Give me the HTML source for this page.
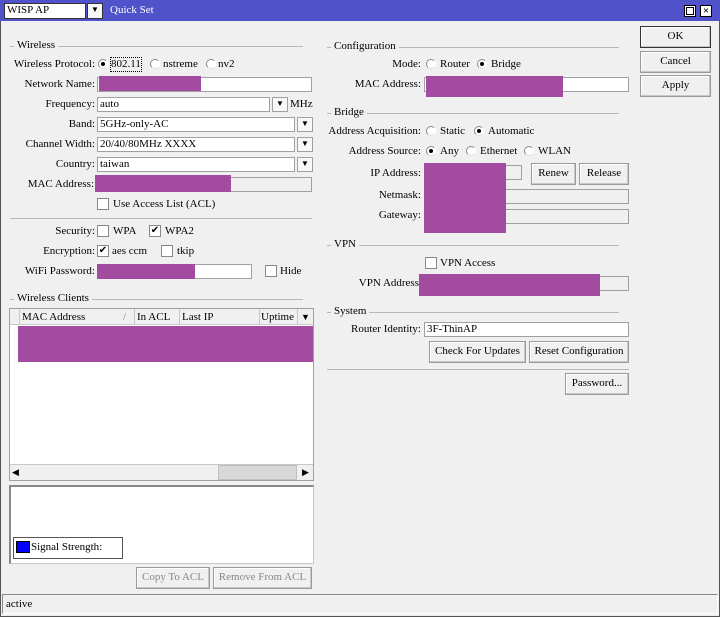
<!DOCTYPE html>
<html><head><style>
*{box-sizing:border-box;margin:0;padding:0}
body{width:720px;height:617px;background:#f0f0f0;font-family:"Liberation Serif",serif;font-size:11px;color:#000;position:relative;overflow:hidden}
.a{position:absolute;white-space:nowrap;line-height:13px}
.r{text-align:right}
.in{position:absolute;background:#fff;border:1px solid #a0a0a0;height:15px;padding-left:2px;line-height:13px}
.ro{background:#f0f0f0}
.pu{position:absolute;background:#a24ba0}
.dd{position:absolute;width:16px;height:15px;border:1px solid #a0a0a0;background:#f8f8f8;font-size:8px;text-align:center;line-height:12px}
.btn{position:absolute;border:1px solid #9a9a9a;background:#f0f0f0;text-align:center;line-height:19px;height:22px;box-shadow:inset -1px -1px #c8c8c8,inset 1px 1px #fff}
.cb{position:absolute;width:12px;height:12px;border:1px solid #888;background:#fff;font-size:10px;line-height:10px;text-align:center}
.rd{position:absolute;width:10px;height:10px;border-radius:50%;border:1px solid #888;border-right-color:#fff;border-bottom-color:#ddd;background:#fff}
.rd.on::after{content:"";position:absolute;left:2px;top:2px;width:4px;height:4px;border-radius:50%;background:#000}
.lg{position:absolute;height:1px;background:#b8b8b8}
.lgt{position:absolute;background:#f0f0f0;padding:0 3px;line-height:13px}
</style></head><body>
<div style="position:absolute;left:0;top:0;width:720px;height:617px;border:1px solid #555"></div>
<div style="position:absolute;left:0;top:0;width:720px;height:21px;background:#4f52c9"></div>
<div class="in" style="left:4px;top:3px;width:82px;height:16px;border-color:#333">WISP AP</div>
<div class="dd" style="left:87px;top:3px;height:16px;border-color:#333">&#9660;</div>
<div class="a" style="left:110px;top:4px;color:#fff">Quick Set</div>
<div style="position:absolute;left:684px;top:5px;width:12px;height:12px;background:#fff;border:1px solid #000;box-shadow:inset 0 0 0 1px #fff,inset 0 0 0 2px #000"></div>
<div style="position:absolute;left:700px;top:5px;width:12px;height:12px;background:#fff;border:1px solid #000;font-size:11px;line-height:10px;text-align:center;font-weight:bold">×</div>

<!-- left: Wireless -->
<div class="lg" style="left:10px;top:46px;width:293px"></div><div class="lgt" style="left:14px;top:39px">Wireless</div>
<div class="a r" style="left:0;width:95px;top:58px">Wireless Protocol:</div>
<div class="rd on" style="left:98px;top:59px"></div><div class="a" style="left:111px;top:58px;outline:1px dotted #000">802.11</div>
<div class="rd" style="left:150px;top:59px"></div><div class="a" style="left:163px;top:58px">nstreme</div>
<div class="rd" style="left:206px;top:59px"></div><div class="a" style="left:218px;top:58px">nv2</div>
<div class="a r" style="left:0;width:95px;top:78px">Network Name:</div>
<div class="in" style="left:97px;top:77px;width:215px"></div><div class="pu" style="left:99px;top:76px;width:102px;height:15px"></div>
<div class="a r" style="left:0;width:95px;top:98px">Frequency:</div>
<div class="in" style="left:97px;top:97px;width:173px">auto</div><div class="dd" style="left:272px;top:97px">&#9660;</div><div class="a" style="left:290px;top:98px">MHz</div>
<div class="a r" style="left:0;width:95px;top:118px">Band:</div>
<div class="in" style="left:97px;top:117px;width:198px">5GHz-only-AC</div><div class="dd" style="left:297px;top:117px">&#9660;</div>
<div class="a r" style="left:0;width:95px;top:138px">Channel Width:</div>
<div class="in" style="left:97px;top:137px;width:198px">20/40/80MHz XXXX</div><div class="dd" style="left:297px;top:137px">&#9660;</div>
<div class="a r" style="left:0;width:95px;top:158px">Country:</div>
<div class="in" style="left:97px;top:157px;width:198px">taiwan</div><div class="dd" style="left:297px;top:157px">&#9660;</div>
<div class="a r" style="left:0;width:94px;top:178px">MAC Address:</div>
<div class="in ro" style="left:95px;top:177px;width:217px"></div><div class="pu" style="left:95px;top:175px;width:136px;height:17px"></div>
<div class="cb" style="left:97px;top:198px"></div><div class="a" style="left:113px;top:198px">Use Access List (ACL)</div>
<div class="lg" style="left:10px;top:218px;width:302px"></div>
<div class="a r" style="left:0;width:95px;top:225px">Security:</div>
<div class="cb" style="left:97px;top:225px"></div><div class="a" style="left:113px;top:225px">WPA</div>
<div class="cb" style="left:149px;top:225px">&#10004;</div><div class="a" style="left:165px;top:225px">WPA2</div>
<div class="a r" style="left:0;width:95px;top:245px">Encryption:</div>
<div class="cb" style="left:97px;top:245px">&#10004;</div><div class="a" style="left:112px;top:245px">aes ccm</div>
<div class="cb" style="left:161px;top:245px"></div><div class="a" style="left:177px;top:245px">tkip</div>
<div class="a r" style="left:0;width:95px;top:265px">WiFi Password:</div>
<div class="in" style="left:97px;top:264px;width:155px"></div><div class="pu" style="left:97px;top:264px;width:98px;height:15px"></div>
<div class="cb" style="left:265px;top:265px"></div><div class="a" style="left:280px;top:265px">Hide</div>

<div class="lg" style="left:10px;top:299px;width:293px"></div><div class="lgt" style="left:14px;top:292px">Wireless Clients</div>
<div style="position:absolute;left:9px;top:308px;width:305px;height:173px;background:#fff;border:1px solid #a0a0a0"></div>
<div style="position:absolute;left:10px;top:309px;width:303px;height:16px;background:#f0f0f0;border-bottom:1px solid #c8c8c8"></div>
<div style="position:absolute;left:19px;top:309px;width:1px;height:16px;background:#c8c8c8"></div>
<div style="position:absolute;left:134px;top:309px;width:1px;height:16px;background:#c8c8c8"></div>
<div style="position:absolute;left:179px;top:309px;width:1px;height:16px;background:#c8c8c8"></div>
<div style="position:absolute;left:259px;top:309px;width:1px;height:16px;background:#c8c8c8"></div>
<div style="position:absolute;left:297px;top:309px;width:1px;height:16px;background:#c8c8c8"></div>
<div class="a" style="left:22px;top:311px">MAC Address</div><div class="a" style="left:123px;top:311px;color:#888">/</div>
<div class="a" style="left:137px;top:311px">In ACL</div><div class="a" style="left:182px;top:311px">Last IP</div><div class="a" style="left:261px;top:311px">Uptime</div>
<div class="a" style="left:301px;top:311px;font-size:9px">&#9660;</div>
<div class="pu" style="left:18px;top:326px;width:295px;height:36px"></div>
<div style="position:absolute;left:10px;top:464px;width:303px;height:16px;background:#f0f0f0;border-top:1px solid #c8c8c8"></div>
<div style="position:absolute;left:218px;top:465px;width:79px;height:15px;background:#d8d8d8;border:1px solid #c0c0c0"></div>
<div class="a" style="left:12px;top:466px;font-size:9px">&#9664;</div><div class="a" style="left:302px;top:466px;font-size:9px">&#9654;</div>
<div style="position:absolute;left:9px;top:485px;width:305px;height:79px;background:#fff;border:1px solid #c8c8c8;border-top:2px solid #888;border-left:2px solid #888"></div>
<div style="position:absolute;left:13px;top:537px;width:110px;height:22px;background:#fff;border:1px solid #555"></div>
<div style="position:absolute;left:16px;top:541px;width:14px;height:12px;background:#00f;border:1px solid #000"></div>
<div class="a" style="left:31px;top:541px">Signal Strength:</div>
<div class="btn" style="left:136px;top:567px;width:74px;color:#888">Copy To ACL</div>
<div class="btn" style="left:213px;top:567px;width:99px;color:#888">Remove From ACL</div>

<!-- right -->
<div class="lg" style="left:327px;top:47px;width:292px"></div><div class="lgt" style="left:331px;top:40px">Configuration</div>
<div class="a r" style="left:0;width:421px;top:58px">Mode:</div>
<div class="rd" style="left:426px;top:59px"></div><div class="a" style="left:440px;top:58px">Router</div>
<div class="rd on" style="left:477px;top:59px"></div><div class="a" style="left:491px;top:58px">Bridge</div>
<div class="a r" style="left:0;width:421px;top:78px">MAC Address:</div>
<div class="in" style="left:424px;top:77px;width:205px"></div><div class="pu" style="left:426px;top:76px;width:137px;height:21px"></div>
<div class="lg" style="left:327px;top:113px;width:292px"></div><div class="lgt" style="left:331px;top:106px">Bridge</div>
<div class="a r" style="left:0;width:421px;top:125px">Address Acquisition:</div>
<div class="rd" style="left:426px;top:126px"></div><div class="a" style="left:440px;top:125px">Static</div>
<div class="rd on" style="left:474px;top:126px"></div><div class="a" style="left:488px;top:125px">Automatic</div>
<div class="a r" style="left:0;width:421px;top:145px">Address Source:</div>
<div class="rd on" style="left:426px;top:146px"></div><div class="a" style="left:440px;top:145px">Any</div>
<div class="rd" style="left:466px;top:146px"></div><div class="a" style="left:480px;top:145px">Ethernet</div>
<div class="rd" style="left:524px;top:146px"></div><div class="a" style="left:538px;top:145px">WLAN</div>
<div class="a r" style="left:0;width:421px;top:167px">IP Address:</div>
<div class="in ro" style="left:424px;top:165px;width:98px"></div>
<div class="btn" style="left:531px;top:163px;width:45px">Renew</div>
<div class="btn" style="left:579px;top:163px;width:50px">Release</div>
<div class="a r" style="left:0;width:421px;top:189px">Netmask:</div>
<div class="in ro" style="left:424px;top:189px;width:205px"></div>
<div class="a r" style="left:0;width:421px;top:209px">Gateway:</div>
<div class="in ro" style="left:424px;top:209px;width:205px"></div>
<div class="pu" style="left:424px;top:163px;width:82px;height:70px"></div>
<div class="lg" style="left:327px;top:245px;width:292px"></div><div class="lgt" style="left:331px;top:238px">VPN</div>
<div class="cb" style="left:425px;top:257px"></div><div class="a" style="left:440px;top:257px">VPN Access</div>
<div class="a r" style="left:0;width:419px;top:277px">VPN Address</div>
<div class="in ro" style="left:419px;top:276px;width:210px"></div><div class="pu" style="left:419px;top:274px;width:181px;height:22px"></div>
<div class="lg" style="left:327px;top:312px;width:292px"></div><div class="lgt" style="left:331px;top:305px">System</div>
<div class="a r" style="left:0;width:421px;top:323px">Router Identity:</div>
<div class="in" style="left:424px;top:322px;width:205px">3F-ThinAP</div>
<div class="btn" style="left:429px;top:341px;width:97px">Check For Updates</div>
<div class="btn" style="left:529px;top:341px;width:100px">Reset Configuration</div>
<div class="lg" style="left:327px;top:369px;width:302px"></div>
<div class="btn" style="left:565px;top:373px;width:64px">Password...</div>

<div class="btn" style="left:640px;top:26px;width:71px;border-color:#333">OK</div>
<div class="btn" style="left:640px;top:51px;width:71px">Cancel</div>
<div class="btn" style="left:640px;top:75px;width:71px">Apply</div>

<div style="position:absolute;left:2px;top:594px;width:716px;height:20px;border:1px solid #888;border-right-color:#fff;border-bottom-color:#fff"></div>
<div class="a" style="left:6px;top:598px">active</div>
</body></html>
